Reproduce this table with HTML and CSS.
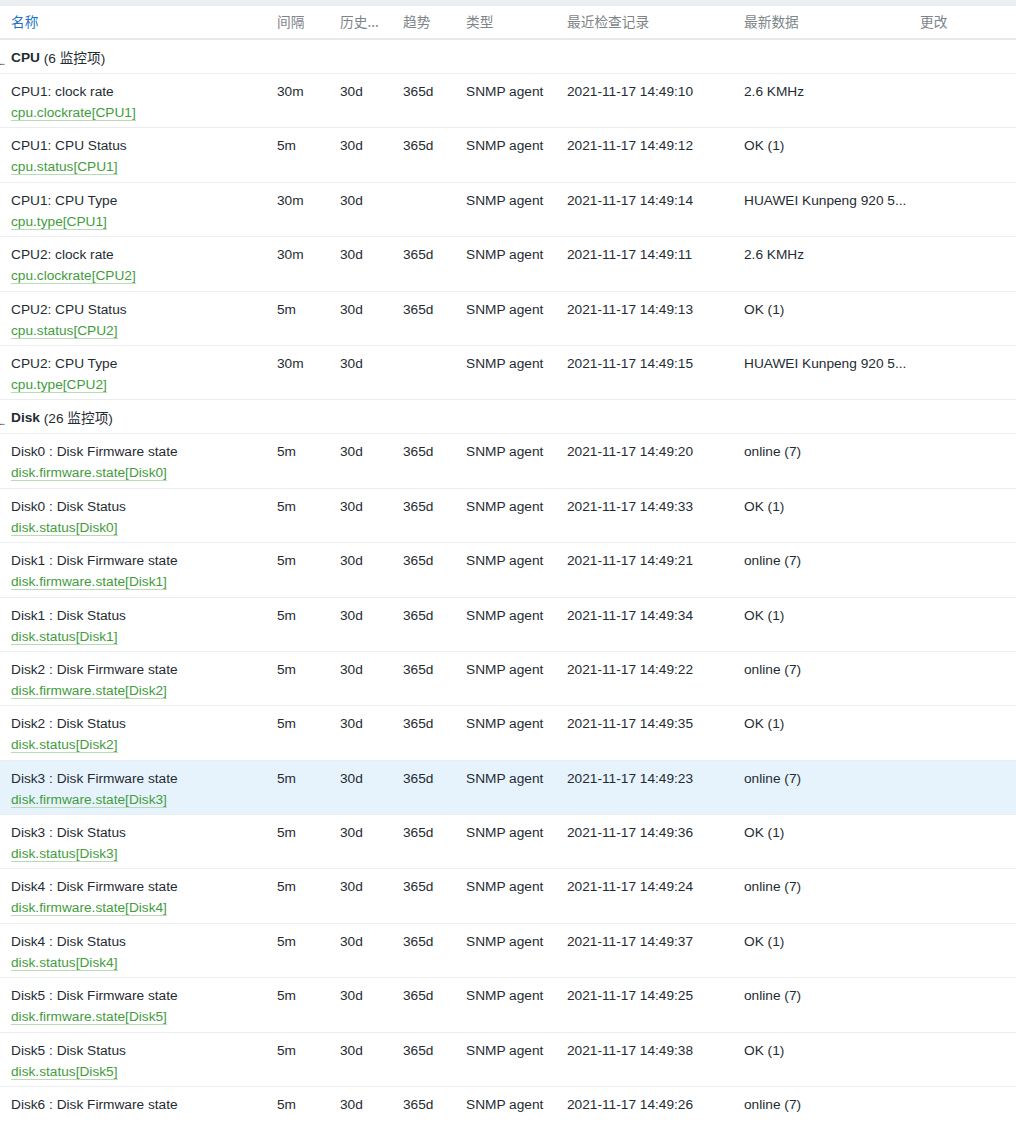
FILE: index.html
```html
<!DOCTYPE html>
<html lang="zh">
<head>
<meta charset="utf-8">
<title>监控项</title>
<link rel="stylesheet" href="styles.css">
</head>
<body>
<div class="topband"></div>
<div class="list">
  <div class="row head">
    <div class="c sorted">名称</div>
    <div class="c">间隔</div>
    <div class="c">历史...</div>
    <div class="c">趋势</div>
    <div class="c">类型</div>
    <div class="c">最近检查记录</div>
    <div class="c">最新数据</div>
    <div class="c">更改</div>
  </div>

  <div class="row group"><span class="dots">...</span><b>CPU</b>&nbsp;(6 监控项)</div>

  <div class="row item">
    <div class="c"><div class="nm">CPU1: clock rate</div><a class="key">cpu.clockrate[CPU1]</a></div>
    <div class="c">30m</div><div class="c">30d</div><div class="c">365d</div><div class="c">SNMP agent</div><div class="c">2021-11-17 14:49:10</div><div class="c">2.6 KMHz</div><div class="c"></div>
  </div>
  <div class="row item">
    <div class="c"><div class="nm">CPU1: CPU Status</div><a class="key">cpu.status[CPU1]</a></div>
    <div class="c">5m</div><div class="c">30d</div><div class="c">365d</div><div class="c">SNMP agent</div><div class="c">2021-11-17 14:49:12</div><div class="c">OK (1)</div><div class="c"></div>
  </div>
  <div class="row item">
    <div class="c"><div class="nm">CPU1: CPU Type</div><a class="key">cpu.type[CPU1]</a></div>
    <div class="c">30m</div><div class="c">30d</div><div class="c"></div><div class="c">SNMP agent</div><div class="c">2021-11-17 14:49:14</div><div class="c">HUAWEI Kunpeng 920 5...</div><div class="c"></div>
  </div>
  <div class="row item">
    <div class="c"><div class="nm">CPU2: clock rate</div><a class="key">cpu.clockrate[CPU2]</a></div>
    <div class="c">30m</div><div class="c">30d</div><div class="c">365d</div><div class="c">SNMP agent</div><div class="c">2021-11-17 14:49:11</div><div class="c">2.6 KMHz</div><div class="c"></div>
  </div>
  <div class="row item">
    <div class="c"><div class="nm">CPU2: CPU Status</div><a class="key">cpu.status[CPU2]</a></div>
    <div class="c">5m</div><div class="c">30d</div><div class="c">365d</div><div class="c">SNMP agent</div><div class="c">2021-11-17 14:49:13</div><div class="c">OK (1)</div><div class="c"></div>
  </div>
  <div class="row item">
    <div class="c"><div class="nm">CPU2: CPU Type</div><a class="key">cpu.type[CPU2]</a></div>
    <div class="c">30m</div><div class="c">30d</div><div class="c"></div><div class="c">SNMP agent</div><div class="c">2021-11-17 14:49:15</div><div class="c">HUAWEI Kunpeng 920 5...</div><div class="c"></div>
  </div>

  <div class="row group"><span class="dots">...</span><b>Disk</b>&nbsp;(26 监控项)</div>

  <div class="row item">
    <div class="c"><div class="nm">Disk0 : Disk Firmware state</div><a class="key">disk.firmware.state[Disk0]</a></div>
    <div class="c">5m</div><div class="c">30d</div><div class="c">365d</div><div class="c">SNMP agent</div><div class="c">2021-11-17 14:49:20</div><div class="c">online (7)</div><div class="c"></div>
  </div>
  <div class="row item">
    <div class="c"><div class="nm">Disk0 : Disk Status</div><a class="key">disk.status[Disk0]</a></div>
    <div class="c">5m</div><div class="c">30d</div><div class="c">365d</div><div class="c">SNMP agent</div><div class="c">2021-11-17 14:49:33</div><div class="c">OK (1)</div><div class="c"></div>
  </div>
  <div class="row item">
    <div class="c"><div class="nm">Disk1 : Disk Firmware state</div><a class="key">disk.firmware.state[Disk1]</a></div>
    <div class="c">5m</div><div class="c">30d</div><div class="c">365d</div><div class="c">SNMP agent</div><div class="c">2021-11-17 14:49:21</div><div class="c">online (7)</div><div class="c"></div>
  </div>
  <div class="row item">
    <div class="c"><div class="nm">Disk1 : Disk Status</div><a class="key">disk.status[Disk1]</a></div>
    <div class="c">5m</div><div class="c">30d</div><div class="c">365d</div><div class="c">SNMP agent</div><div class="c">2021-11-17 14:49:34</div><div class="c">OK (1)</div><div class="c"></div>
  </div>
  <div class="row item">
    <div class="c"><div class="nm">Disk2 : Disk Firmware state</div><a class="key">disk.firmware.state[Disk2]</a></div>
    <div class="c">5m</div><div class="c">30d</div><div class="c">365d</div><div class="c">SNMP agent</div><div class="c">2021-11-17 14:49:22</div><div class="c">online (7)</div><div class="c"></div>
  </div>
  <div class="row item">
    <div class="c"><div class="nm">Disk2 : Disk Status</div><a class="key">disk.status[Disk2]</a></div>
    <div class="c">5m</div><div class="c">30d</div><div class="c">365d</div><div class="c">SNMP agent</div><div class="c">2021-11-17 14:49:35</div><div class="c">OK (1)</div><div class="c"></div>
  </div>
  <div class="row item hover">
    <div class="c"><div class="nm">Disk3 : Disk Firmware state</div><a class="key">disk.firmware.state[Disk3]</a></div>
    <div class="c">5m</div><div class="c">30d</div><div class="c">365d</div><div class="c">SNMP agent</div><div class="c">2021-11-17 14:49:23</div><div class="c">online (7)</div><div class="c"></div>
  </div>
  <div class="row item">
    <div class="c"><div class="nm">Disk3 : Disk Status</div><a class="key">disk.status[Disk3]</a></div>
    <div class="c">5m</div><div class="c">30d</div><div class="c">365d</div><div class="c">SNMP agent</div><div class="c">2021-11-17 14:49:36</div><div class="c">OK (1)</div><div class="c"></div>
  </div>
  <div class="row item">
    <div class="c"><div class="nm">Disk4 : Disk Firmware state</div><a class="key">disk.firmware.state[Disk4]</a></div>
    <div class="c">5m</div><div class="c">30d</div><div class="c">365d</div><div class="c">SNMP agent</div><div class="c">2021-11-17 14:49:24</div><div class="c">online (7)</div><div class="c"></div>
  </div>
  <div class="row item">
    <div class="c"><div class="nm">Disk4 : Disk Status</div><a class="key">disk.status[Disk4]</a></div>
    <div class="c">5m</div><div class="c">30d</div><div class="c">365d</div><div class="c">SNMP agent</div><div class="c">2021-11-17 14:49:37</div><div class="c">OK (1)</div><div class="c"></div>
  </div>
  <div class="row item">
    <div class="c"><div class="nm">Disk5 : Disk Firmware state</div><a class="key">disk.firmware.state[Disk5]</a></div>
    <div class="c">5m</div><div class="c">30d</div><div class="c">365d</div><div class="c">SNMP agent</div><div class="c">2021-11-17 14:49:25</div><div class="c">online (7)</div><div class="c"></div>
  </div>
  <div class="row item">
    <div class="c"><div class="nm">Disk5 : Disk Status</div><a class="key">disk.status[Disk5]</a></div>
    <div class="c">5m</div><div class="c">30d</div><div class="c">365d</div><div class="c">SNMP agent</div><div class="c">2021-11-17 14:49:38</div><div class="c">OK (1)</div><div class="c"></div>
  </div>
  <div class="row item last">
    <div class="c"><div class="nm">Disk6 : Disk Firmware state</div></div>
    <div class="c">5m</div><div class="c">30d</div><div class="c">365d</div><div class="c">SNMP agent</div><div class="c">2021-11-17 14:49:26</div><div class="c">online (7)</div><div class="c"></div>
  </div>
</div>
</body>
</html>
```

FILE: styles.css
```css
html, body {
  margin: 0;
  padding: 0;
  background: #ffffff;
}
body {
  width: 1016px;
  height: 1131px;
  overflow: hidden;
  font-family: "Liberation Sans", Arial, "Noto Sans CJK SC", sans-serif;
  font-size: 13.7px;
  color: #1f2c33;
}
.topband {
  height: 6px;
  background: #ebeef0;
}
.row {
  display: grid;
  grid-template-columns: 266px 63px 63px 63px 101px 177px 176px 1fr;
  padding-left: 11px;
  box-sizing: border-box;
  border-bottom: 1px solid #ebeef0;
}
.head {
  height: 34px;
  align-items: center;
  border-bottom: 2px solid #e6e9eb;
  color: #7e8589;
  font-family: "Noto Sans CJK SC", "Liberation Sans", sans-serif;
  font-size: 13.7px;
}
.head .c {
  padding-bottom: 2px;
}
.head .sorted {
  color: #1e73c4;
}
.group {
  display: flex;
  align-items: center;
  height: 34px;
  padding-left: 0;
  padding-top: 1px;
  font-family: "Liberation Sans", "Noto Sans CJK SC", sans-serif;
}
.group b {
  font-weight: bold;
}
.dots {
  display: inline-block;
  width: 12px;
  font-size: 10px;
  line-height: 10px;
  color: #333;
  margin-top: 10px;
  margin-left: -1px;
  letter-spacing: -1.2px;
}
.item {
  height: 54.4px;
  padding-top: 9px;
  line-height: 17px;
}
.item.hover {
  background: #e7f3fc;
}
.item.last {
  border-bottom: none;
}
.nm {
  height: 17px;
}
.key {
  display: inline-block;
  margin-top: 5px;
  color: #3f9d3c;
  line-height: 15px;
  border-bottom: 1px solid #b7dbb3;
  text-decoration: none;
}
```
